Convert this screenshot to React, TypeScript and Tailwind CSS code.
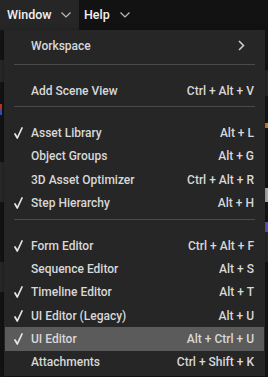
import React from "react"

type Item = { label: string; shortcut?: string; checked?: boolean; active?: boolean; submenu?: boolean }

const groups: Item[][] = [
  [{ label: "Workspace", submenu: true }],
  [{ label: "Add Scene View", shortcut: "Ctrl + Alt + V" }],
  [
    { label: "Asset Library", shortcut: "Alt + L", checked: true },
    { label: "Object Groups", shortcut: "Alt + G" },
    { label: "3D Asset Optimizer", shortcut: "Ctrl + Alt + R" },
    { label: "Step Hierarchy", shortcut: "Alt + H", checked: true },
  ],
  [
    { label: "Form Editor", shortcut: "Ctrl + Alt + F", checked: true },
    { label: "Sequence Editor", shortcut: "Alt + S" },
    { label: "Timeline Editor", shortcut: "Alt + T", checked: true },
    { label: "UI Editor (Legacy)", shortcut: "Alt + U", checked: true },
    { label: "UI Editor", shortcut: "Alt + Ctrl + U", checked: true, active: true },
    { label: "Attachments", shortcut: "Ctrl + Shift + K" },
  ],
]

function Check() {
  return (
    <svg width="9" height="12" viewBox="0 0 9 12" fill="none" stroke="#e6e6e6" strokeWidth="1.7" strokeLinecap="round" strokeLinejoin="round">
      <path d="M1 7l2.3 4L8 1" />
    </svg>
  )
}

function ChevronDown() {
  return (
    <svg width="10" height="6" viewBox="0 0 10 6" fill="none" stroke="#bdbdbd" strokeWidth="1.2">
      <path d="M0.5 0.5L5 5l4.5-4.5" />
    </svg>
  )
}

function Row({ item }: { item: Item }) {
  return (
    <div className={`flex h-[23.4px] items-center pl-[9px] pr-[10px] ${item.active ? "bg-[#5b5b5b]" : ""}`}>
      <div className="flex w-[17px] items-center">{item.checked && <Check />}</div>
      <span className="flex-1 text-[12px] font-medium text-[#d8d8d8]">{item.label}</span>
      {item.shortcut && <span className="text-[12px] font-medium text-[#d8d8d8]">{item.shortcut}</span>}
      {item.submenu && (
        <svg width="7" height="11" viewBox="0 0 7 11" fill="none" stroke="#d0d0d0" strokeWidth="1.5" className="mr-[9px]">
          <path d="M1 1l4.5 4.5L1 10" />
        </svg>
      )}
    </div>
  )
}

export default function App() {
  return (
    <div className="relative h-[377px] w-[268px] overflow-hidden bg-[#1c1c1c] font-['Roboto',sans-serif]">
      <div className="flex h-[30px] items-center bg-[#121212]">
        <div className="flex h-full w-[79px] items-center gap-[9px] bg-[#262626] pl-[7px]">
          <span className="text-[12.5px] font-medium text-[#f0f0f0]">Window</span>
          <ChevronDown />
        </div>
        <div className="flex h-full items-center gap-[10px] pl-[5px]">
          <span className="text-[12.5px] font-medium text-[#f0f0f0]">Help</span>
          <ChevronDown />
        </div>
      </div>

      <div className="flex h-[347px] justify-between">
        <div className="flex w-[4px] flex-col bg-[#151515]">
          <div className="h-[30px]" />
          <div className="h-[22px] bg-[#2a2a2a]" />
          <div className="mt-[22px] h-[5px] w-[2px] bg-[#c0392b]" />
          <div className="h-[6px] w-[2px] bg-[#3553c8]" />
          <div className="mt-[47px] h-[40px] bg-[#2b2b2b]" />
          <div className="mt-[60px] h-[30px] bg-[#2a2a2a]" />
        </div>
        <div className="flex w-[3px] flex-col bg-[#161616]">
          <div className="h-[40px]" />
          <div className="h-[26px] bg-[#2a2a2a]" />
          <div className="mt-[27px] h-[5px] bg-[#d98b2b]" />
          <div className="mt-[60px] h-[14px] bg-[#bdbdbd]" />
          <div className="mt-[20px] h-[10px] bg-[#6a5acd]" />
          <div className="h-[30px] bg-[#2a2a2a]" />
        </div>
      </div>

      <div className="absolute left-[4px] top-[30px] w-[261px] bg-[#262626] px-px pb-[2px] pt-[4px] shadow-[0_2px_6px_rgba(0,0,0,0.5)]">
        {groups.map((g, i) => (
          <div key={i}>
            {i > 0 && <div className={`mx-[9px] mb-[14px] h-px bg-[#4a4a4a] ${i === 1 ? "mt-[6.5px]" : "mt-[4px]"}`} />}
            {g.map((item) => (
              <Row key={item.label} item={item} />
            ))}
          </div>
        ))}
      </div>
    </div>
  )
}
